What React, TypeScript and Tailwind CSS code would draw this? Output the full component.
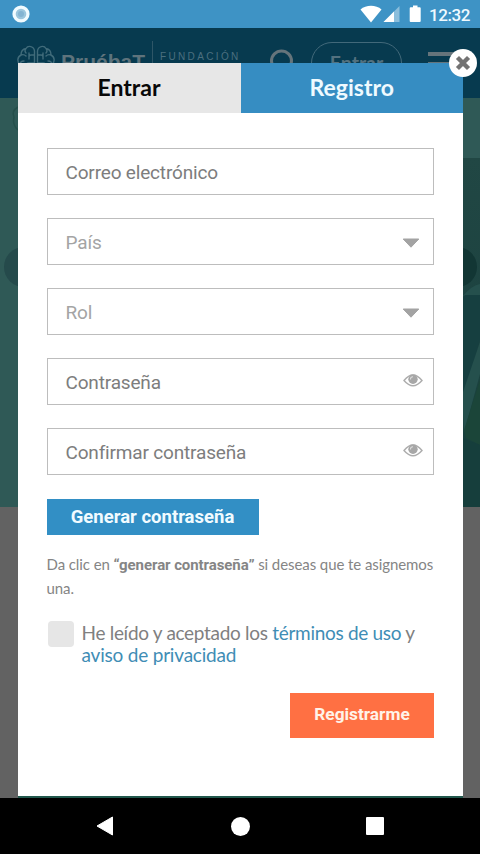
import type { ReactNode } from 'react'

const lato = "font-['Lato','Noto_Sans',sans-serif]"
const roboto = "font-['Roboto','Noto_Sans',sans-serif]"

function StatusBar() {
  return (
    <div className="flex h-7 items-center bg-[#3e93c5] pl-[12px] pr-[10px]">
      <svg className="h-[18px] w-[18px]" viewBox="0 0 18 18">
        <circle cx="9" cy="9" r="8.6" fill="#f1fbff" />
        <circle cx="9" cy="9" r="5.3" fill="#9cc6dd" />
        <circle cx="9" cy="9" r="3" fill="#84b4d2" />
      </svg>
      <svg className="ml-auto h-5 w-[66px]" viewBox="360 4 66 20" fill="#fff">
        <path d="M360.5 9.5C366 4.5 376 4.5 381.5 9.5L371 22.5Z" />
        <path d="M399.5 6V22H383.500Z" opacity=".4" />
        <path d="M394 11.500V22H383.500Z" />
        <path d="M413 5.500h4.500v1.800h2.200q1 0 1 1V21q0 1-1 1h-9q-1 0-1-1V8.300q0-1 1-1H413Z" />
      </svg>
      <span className={`${roboto} ml-[3px] mt-px w-[41px] whitespace-nowrap text-[17px] font-medium leading-5 tracking-[-0.4px] text-[#effaff]`}>12:32</span>
    </div>
  )
}

function BrainLogo() {
  return (
    <svg className="h-[36px] w-[38px]" viewBox="0 0 38 36" fill="none" stroke="#406b7a" strokeWidth="1.4" strokeLinecap="round">
      <path d="M17.500 6V29C17 33 10 33 9 29C3 29 0 24 3 20C0 17 0 12 4 10C4 6 6 4 9 3.500C11 0 17 1 17.500 6ZM9 3.500Q7 6 9 8M4 10Q7 9 9 11M3 20Q3 16 7 16M12 8V14M17 10H14Q12 10 12 12M17 18H12Q9 18 9 21" />
      <path d="M20.500 6V29C21 33 28 33 29 29C35 29 38 24 35 20C38 17 38 12 34 10C34 6 32 4 29 3.500C27 0 21 1 20.500 6ZM29 3.500Q31 6 29 8M34 10Q31 9 29 11M35 20Q35 16 31 16M26 8V14M21 10H24Q26 10 26 12M21 18H26Q29 18 29 21" />
    </svg>
  )
}

function SiteHeader() {
  return (
    <header className="flex h-[70px] items-start bg-[#073a4f] pl-[17px] text-[#5b707a]">
      <div className="mt-[17px]">
        <BrainLogo />
      </div>
      <span className="ml-[6px] mt-[20px] w-[86px] whitespace-nowrap font-['Liberation_Sans',sans-serif] text-[21px] font-bold leading-7 text-[#5e737c]">PruébaT</span>
      <div className="ml-[5px] mt-[13px] h-[46px] w-px bg-[#2e5667]" />
      <div className="ml-[7px] mt-[22px] w-[84px] whitespace-nowrap font-['Liberation_Sans',sans-serif] text-[10px] leading-[14px] tracking-[2.350px] text-[#4b6f7f]">
        FUNDACIÓN
      </div>
      <svg className="ml-[25px] mt-[21px] h-7 w-7" viewBox="0 0 28 28" fill="none" stroke="#65747b" strokeWidth="3">
        <circle cx="12.500" cy="12" r="10" />
        <path d="M20 20l7 7" />
      </svg>
      <div className={`${lato} ml-[14px] mt-[14px] h-[42px] w-[91px] rounded-[21px] border border-[#42697a] pt-[8px] text-center text-[19.500px] font-bold leading-6 text-[#53717f]`}>Entrar</div>
      <div className="ml-[26px] mt-[24px] flex w-[30px] flex-col gap-1.5">
        <div className="h-1 bg-[#65747b]" />
        <div className="h-1 bg-[#65747b]" />
        <div className="h-1 bg-[#65747b]" />
      </div>
    </header>
  )
}

function Hero() {
  return (
    <div className="h-[409px] bg-[#2f5956]">
      <svg className="h-[409px] w-[480px]" viewBox="0 98 480 409">
        <defs>
          <linearGradient id="shade" x1="0" y1="158" x2="0" y2="507" gradientUnits="userSpaceOnUse">
            <stop stopColor="#214744" />
            <stop offset="1" stopColor="#173e3c" />
          </linearGradient>
        </defs>
        <path d="M455 158h25v349h-25Z" fill="url(#shade)" />
        <path d="M462 298l5-4h13v45l-18 68Z" fill="#163f40" />
        <path d="M462 395l18-53v32l-16 59Z" fill="#25504d" />
        <path d="M464 430l16-50v65l-14-7Z" fill="#1b4539" />
        <path d="M462 438l18 7v62h-18Z" fill="#163e3c" />
        <path d="M462 297q10-12 18-13v11h-15Z" fill="#25504d" />
        <path d="M18 107q-7 4-4 10q-2 8 4 13" fill="none" stroke="#254f4a" strokeWidth="1.500" />
        <circle cx="24" cy="267" r="20" fill="#254a4b" />
        <circle cx="457" cy="267" r="20" fill="#123634" />
      </svg>
    </div>
  )
}

function Field({ label, muted, children }: { label: string; muted?: boolean; children?: ReactNode }) {
  return (
    <div className="flex h-[47px] items-center justify-between border border-[#bdbdbd] pl-[18px] pr-[10px]">
      <span className={`${roboto} mt-0.5 text-[19px] leading-6 tracking-[-0.17px] ${muted ? 'text-[#a4a4a4]' : 'text-[#7d7d7d]'}`}>{label}</span>
      {children}
    </div>
  )
}

function Caret() {
  return (
    <svg className="mr-[3px] mt-0.5 h-[10px] w-[18px]" viewBox="0 0 18 10">
      <path d="M1.200 1H16.800L9 9.200Z" fill="#a3a3a3" stroke="#a3a3a3" strokeLinejoin="round" />
    </svg>
  )
}

function Eye() {
  return (
    <svg className="mb-[3px] h-[14px] w-5" viewBox="0 0 20 14">
      <path d="M1 7.500Q10-3.500 19 7.500Q10 18 1 7.500Z" fill="none" stroke="#adadad" strokeWidth="1.400" />
      <circle cx="10" cy="6.300" r="4.700" fill="#a7a7a7" />
      <path d="M7.500 6.500Q7.500 3.800 10 3.800" fill="none" stroke="#dedede" strokeWidth="1.100" />
    </svg>
  )
}

function RegisterModal() {
  return (
    <div className="absolute left-[17.5px] top-[35px] flex h-[733px] w-[445.500px] flex-col bg-white">
      <div className={`${lato} flex h-[50px] shrink-0 text-[23px] font-bold leading-[49px]`}>
        <div className="w-[223px] bg-[#e7e7e7] text-center text-[#080808]">Entrar</div>
        <div className="flex-1 bg-[#368dc2] text-center text-[#effaff]">Registro</div>
      </div>

      <div className="flex flex-col pl-[29px] pr-[29px] pt-[35px]">
        <div className="flex flex-col gap-[23px]">
          <Field label="Correo electrónico" />
          <Field label="País" muted>
            <Caret />
          </Field>
          <Field label="Rol" muted>
            <Caret />
          </Field>
          <Field label="Contraseña">
            <Eye />
          </Field>
          <Field label="Confirmar contraseña">
            <Eye />
          </Field>
        </div>

        <button className={`${roboto} mt-6 h-[35.500px] w-[212px] bg-[#328fc5] pt-px text-[18.5px] font-bold leading-[34px] text-[#f1fbff]`}>Generar contraseña</button>

        <p className={`${lato} mt-[18px] text-[15px] leading-[23px] tracking-[-0.080px] text-[#858585]`}>
          <span className="block whitespace-nowrap">
            Da clic en <b className={roboto}>“generar contraseña”</b> si deseas que te asignemos
          </span>
          una.
        </p>

        <div className="mt-[21.500px] flex gap-2">
          <div className="ml-px h-[26px] w-[26px] shrink-0 rounded bg-[#e6e6e6]" />
          <p className={`${lato} mt-px whitespace-nowrap text-[19px] leading-[22px] tracking-[-0.300px] text-[#808080]`}>
            He leído y aceptado los <a className="text-[#3f8db5]">términos de uso</a> y
            <br />
            <a className="tracking-[-0.200px] text-[#3f8db5]">aviso de privacidad</a>
          </p>
        </div>

        <button className={`${roboto} mt-[26.500px] h-[45.500px] w-36 self-end bg-[#ff7043] text-[17.300px] font-bold text-[#fff3e9]`}>Registrarme</button>
      </div>

      <div className="absolute -right-[14px] -top-[14px] flex h-7 w-7 items-center justify-center rounded-full bg-white">
        <svg className="h-4 w-4" viewBox="0 0 16 16" stroke="#737373" strokeWidth="4.400" strokeLinecap="square">
          <path d="M4 4l8 8M12 4l-8 8" />
        </svg>
      </div>
    </div>
  )
}

function NavigationBar() {
  return (
    <div className="flex h-14 items-center justify-between bg-black px-24">
      <svg className="h-5 w-[18px]" viewBox="0 0 18 20">
        <path d="M1 10L16.500 1V19Z" fill="#fff" stroke="#fff" strokeLinejoin="round" />
      </svg>
      <div className="h-[19px] w-[19px] rounded-full bg-white" />
      <div className="h-[18px] w-[18px] rounded-[1px] bg-white" />
    </div>
  )
}

export default function App() {
  return (
    <div className="flex h-[854px] w-[480px] flex-col overflow-hidden">
      <StatusBar />
      <main className="relative h-[770px] bg-[#626262]">
        <SiteHeader />
        <Hero />
        <div className="mx-auto mt-[289px] h-0.5 w-[445px] bg-[#21574c]" />
        <RegisterModal />
      </main>
      <NavigationBar />
    </div>
  )
}
